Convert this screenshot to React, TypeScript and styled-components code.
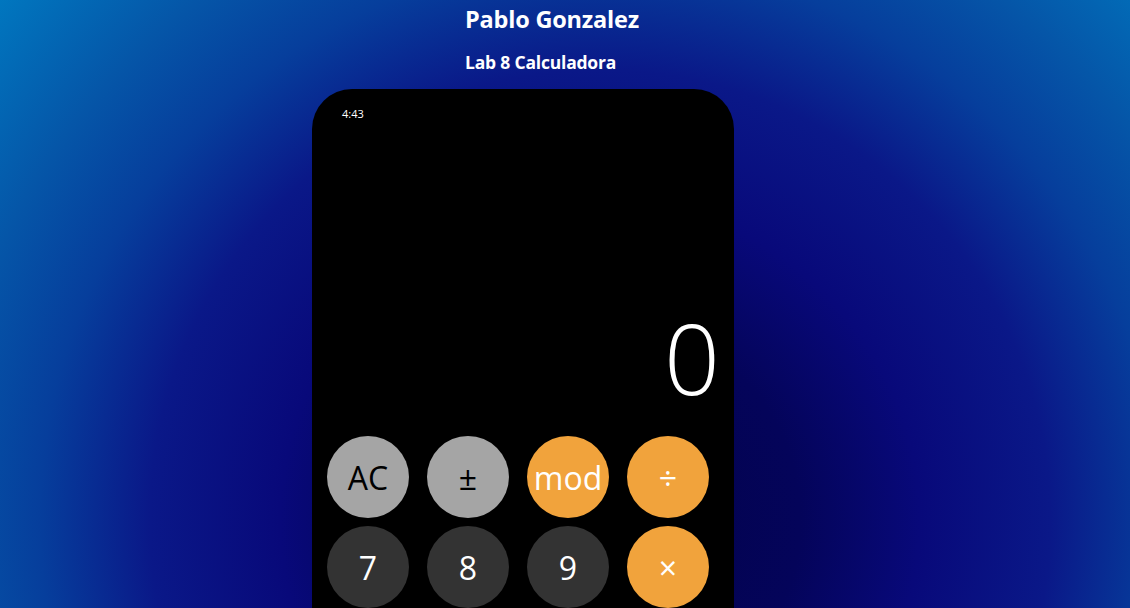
import React from "react";
import styled, { createGlobalStyle } from "styled-components";

const Global = createGlobalStyle`
  html, body {
    margin: 0;
    padding: 0;
    overflow: hidden;
    height: 608px;
  }
  body {
    font-family: "Open Sans", "Noto Sans", sans-serif;
    background: radial-gradient(circle at 600px 520px,
      #020248 0px, #04045a 200px, #08097a 320px, #0a1888 450px,
      #063e9c 560px, #0556a8 660px, #0078c0 800px);
  }
`;

const Page = styled.div`
  display: flex;
  flex-direction: column;
  height: 608px;
  overflow: hidden;
`;

const Header = styled.header`
  display: flex;
  flex-direction: column;
  padding-left: 465px;
  color: #ffffff;
`;

const Title = styled.h1`
  margin: 3px 0 0;
  font-size: 23.5px;
  line-height: 32px;
  font-weight: 700;
  letter-spacing: -0.2px;
`;

const Subtitle = styled.h3`
  margin: 16px 0 0;
  font-size: 17.5px;
  line-height: 22px;
  font-weight: 700;
  letter-spacing: -0.2px;
`;

const Phone = styled.div`
  margin: 16px 0 0 312px;
  width: 422px;
  background: #000000;
  border-radius: 40px;
  padding: 18px 0 40px;
  box-sizing: border-box;
  display: flex;
  flex-direction: column;
  flex-shrink: 0;
`;

const Status = styled.div`
  padding-left: 30px;
  height: 20px;
  color: #ffffff;
  font-size: 11px;
  line-height: 14px;
`;

const Display = styled.div`
  height: 289px;
  display: flex;
  align-items: flex-end;
  justify-content: flex-end;
  padding: 0 14px 10px 0;
  color: #ffffff;
  font-size: 98px;
  font-weight: 300;
  line-height: 98px;
  box-sizing: border-box;
`;

const Keypad = styled.div`
  margin-top: 20px;
  padding-left: 15px;
  display: grid;
  grid-template-columns: repeat(4, 82px);
  grid-auto-rows: 82px;
  column-gap: 18px;
  row-gap: 8px;
`;

type Kind = "light" | "dark" | "accent";

const bg: Record<Kind, string> = {
  light: "#a5a5a5",
  dark: "#333333",
  accent: "#f1a33c",
};

const Key = styled.button<{ $kind: Kind; $wide?: boolean }>`
  border: none;
  padding: 0;
  border-radius: 41px;
  background: ${(p) => bg[p.$kind]};
  color: ${(p) => (p.$kind === "light" ? "#000000" : "#ffffff")};
  font-family: "Open Sans", "Noto Sans", sans-serif;
  font-size: 32px;
  font-weight: 400;
  display: flex;
  align-items: center;
  justify-content: ${(p) => (p.$wide ? "flex-start" : "center")};
  padding-left: ${(p) => (p.$wide ? "30px" : "0")};
  grid-column: ${(p) => (p.$wide ? "span 2" : "auto")};
  cursor: pointer;
`;

const keys: { label: string; kind: Kind; wide?: boolean }[] = [
  { label: "AC", kind: "light" },
  { label: "±", kind: "light" },
  { label: "mod", kind: "accent" },
  { label: "÷", kind: "accent" },
  { label: "7", kind: "dark" },
  { label: "8", kind: "dark" },
  { label: "9", kind: "dark" },
  { label: "×", kind: "accent" },
  { label: "4", kind: "dark" },
  { label: "5", kind: "dark" },
  { label: "6", kind: "dark" },
  { label: "−", kind: "accent" },
  { label: "1", kind: "dark" },
  { label: "2", kind: "dark" },
  { label: "3", kind: "dark" },
  { label: "+", kind: "accent" },
  { label: "0", kind: "dark", wide: true },
  { label: ".", kind: "dark" },
  { label: "=", kind: "accent" },
];

export default function App() {
  return (
    <>
      <Global />
      <Page>
        <Header>
          <Title>Pablo Gonzalez</Title>
          <Subtitle>Lab 8 Calculadora</Subtitle>
        </Header>
        <Phone>
          <Status>4:43</Status>
          <Display>0</Display>
          <Keypad>
            {keys.map((k) => (
              <Key key={k.label} $kind={k.kind} $wide={k.wide}>
                {k.label}
              </Key>
            ))}
          </Keypad>
        </Phone>
      </Page>
    </>
  );
}
